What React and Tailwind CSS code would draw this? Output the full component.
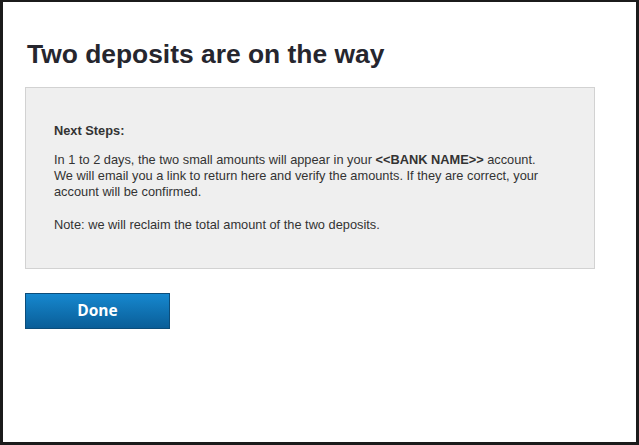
export default function App() {
  return (
    <div className="h-[445px] w-[639px] overflow-hidden bg-white font-['Liberation_Sans',Arial,sans-serif]">
      <div className="h-full w-full border-t-2 border-l-[3px] border-r-[3px] border-b-[3px] border-[#1b1b1b] pl-[22px] pr-[42px]">
        <h1 className="mt-[37px] pl-[2px] text-[26.4px] font-bold leading-[30px] text-[#26262e]">
          Two deposits are on the way
        </h1>

        <div className="mt-[18px] w-[570px] border border-[#d2d2d2] bg-[#efefef] pt-[35px] pb-[35px] pl-[28px] pr-[10px] text-[12.8px] leading-[16px] text-[#333333]">
          <p className="font-bold">Next Steps:</p>
          <p className="mt-[13px]">
            In 1 to 2 days, the two small amounts will appear in your <span className="font-bold">&lt;&lt;BANK NAME&gt;&gt;</span> account.
            <br />
            We will email you a link to return here and verify the amounts. If they are correct, your
            <br />
            account will be confirmed.
          </p>
          <p className="mt-[17px]">Note: we will reclaim the total amount of the two deposits.</p>
        </div>

        <button className="mt-[24px] flex h-[36px] w-[145px] items-center justify-center border border-[#0c4d7a] bg-gradient-to-b from-[#1688cf] to-[#0a5e98] font-['Open_Sans',sans-serif] text-[15.5px] font-bold text-white">
          Done
        </button>
      </div>
    </div>
  );
}
